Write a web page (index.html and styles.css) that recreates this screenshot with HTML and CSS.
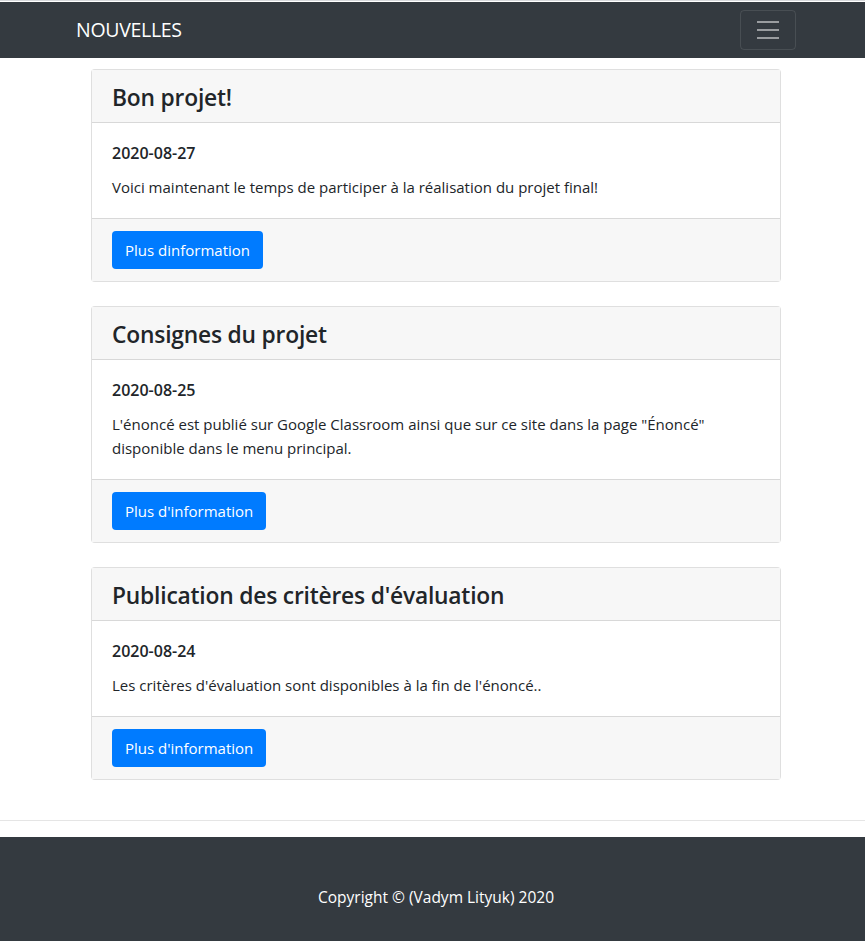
FILE: index.html
```html
<!DOCTYPE html>
<html lang="fr">
<head>
<meta charset="utf-8">
<title>Nouvelles</title>
<link rel="stylesheet" href="styles.css">
</head>
<body>
<nav class="navbar">
  <div class="container nav-inner">
    <a class="brand" href="#">NOUVELLES</a>
    <button class="toggler" type="button" aria-label="Menu">
      <svg width="30" height="30" viewBox="0 0 30 30"><path stroke="rgba(255,255,255,0.5)" stroke-linecap="butt" stroke-miterlimit="10" stroke-width="2" d="M4 7h22M4 15h22M4 23h22"/></svg>
    </button>
  </div>
</nav>
<main class="container content">
  <article class="card">
    <div class="card-header"><h4 class="card-title">Bon projet!</h4></div>
    <div class="card-body">
      <h6 class="card-date">2020-08-27</h6>
      <p class="card-text">Voici maintenant le temps de participer à la réalisation du projet final!</p>
    </div>
    <div class="card-footer"><a class="btn" href="#">Plus dinformation</a></div>
  </article>
  <article class="card">
    <div class="card-header"><h4 class="card-title">Consignes du projet</h4></div>
    <div class="card-body">
      <h6 class="card-date">2020-08-25</h6>
      <p class="card-text">L'énoncé est publié sur Google Classroom ainsi que sur ce site dans la page "Énoncé" disponible dans le menu principal.</p>
    </div>
    <div class="card-footer"><a class="btn" href="#">Plus d'information</a></div>
  </article>
  <article class="card">
    <div class="card-header"><h4 class="card-title">Publication des critères d'évaluation</h4></div>
    <div class="card-body">
      <h6 class="card-date">2020-08-24</h6>
      <p class="card-text">Les critères d'évaluation sont disponibles à la fin de l'énoncé..</p>
    </div>
    <div class="card-footer"><a class="btn" href="#">Plus d'information</a></div>
  </article>
</main>
<hr class="divider">
<footer class="site-footer">
  <p class="copyright">Copyright © (Vadym Lityuk) 2020</p>
</footer>
</body>
</html>
```
FILE: styles.css
```css
* { box-sizing: border-box; }
html, body { margin: 0; padding: 0; }
body {
  font-family: "Open Sans", "Noto Sans", "Liberation Sans", sans-serif;
  font-size: 15px;
  line-height: 1.6;
  color: #212529;
  background: #fff;
  border-top: 1px solid #d6d8db;
}
.container {
  width: 720px;
  margin-left: 76px;
}
.navbar {
  background: #343a40;
  padding: 8px 0;
  margin-top: 1px;
}
.nav-inner {
  display: flex;
  align-items: center;
  justify-content: space-between;
}
.brand {
  color: #fff;
  text-decoration: none;
  font-size: 19.5px;
  line-height: 30px;
  letter-spacing: -0.3px;
}
.toggler {
  width: 56px;
  height: 40px;
  background: transparent;
  border: 1px solid rgba(255,255,255,0.1);
  border-radius: 4px;
  display: flex;
  align-items: center;
  justify-content: center;
  padding: 0;
}
.content {
  padding: 11px 15px 17px;
}
.card {
  border: 1px solid rgba(0,0,0,0.125);
  border-radius: 4px;
  margin-bottom: 24px;
  background: #fff;
}
.card:last-child {
  margin-bottom: 0;
}
.card-header {
  background: #f7f7f7;
  border-bottom: 1px solid rgba(0,0,0,0.125);
  padding: 14px 20px 10px;
}
.card-title {
  margin: 0;
  font-size: 22.8px;
  font-weight: 600;
  line-height: 28px;
  letter-spacing: -0.2px;
}
.card-body {
  padding: 21px 20px 19px;
}
.card-date {
  margin: 0 0 12px;
  font-size: 16px;
  font-weight: 600;
  line-height: 19px;
}
.card-text {
  margin: 0;
  line-height: 24px;
  font-size: 15px;
}
.card-footer {
  background: #f7f7f7;
  border-top: 1px solid rgba(0,0,0,0.125);
  padding: 12px 20px;
}
.btn {
  display: inline-block;
  background: #007bff;
  color: #fff;
  text-decoration: none;
  border-radius: 4px;
  padding: 6px 13px;
  font-size: 15px;
  line-height: 26px;
}
.divider {
  border: 0;
  border-top: 1px solid #e5e5e5;
  margin: 23px 0 16px;
}
.site-footer {
  background: #343a40;
  color: #fff;
  padding: 48px 0 36px;
  text-align: center;
}
.copyright {
  margin: 0 0 0 7px;
  font-size: 15.5px;
  line-height: 24px;
}
```
